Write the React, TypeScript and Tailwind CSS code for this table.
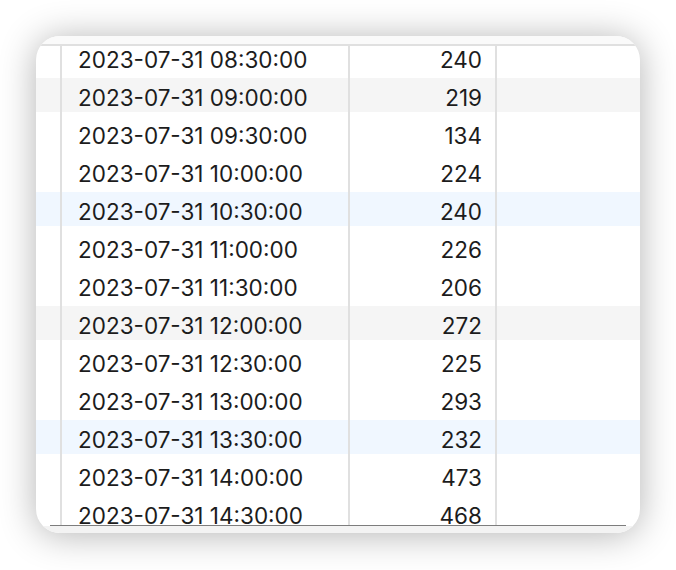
const ROWS: { time: string; value: number; tone?: 'gray' | 'blue' }[] = [
  { time: '2023-07-31 08:30:00', value: 240 },
  { time: '2023-07-31 09:00:00', value: 219, tone: 'gray' },
  { time: '2023-07-31 09:30:00', value: 134 },
  { time: '2023-07-31 10:00:00', value: 224 },
  { time: '2023-07-31 10:30:00', value: 240, tone: 'blue' },
  { time: '2023-07-31 11:00:00', value: 226 },
  { time: '2023-07-31 11:30:00', value: 206 },
  { time: '2023-07-31 12:00:00', value: 272, tone: 'gray' },
  { time: '2023-07-31 12:30:00', value: 225 },
  { time: '2023-07-31 13:00:00', value: 293 },
  { time: '2023-07-31 13:30:00', value: 232, tone: 'blue' },
  { time: '2023-07-31 14:00:00', value: 473 },
  { time: '2023-07-31 14:30:00', value: 468 },
];

const TONE_BG: Record<string, string> = {
  gray: 'bg-[linear-gradient(to_bottom,#f5f5f5_34px,transparent_34px)]',
  blue: 'bg-[linear-gradient(to_bottom,#f0f7ff_34px,transparent_34px)]',
  none: '',
};

// first row is scrolled partly under the header, so it's shorter
const Row = ({ time, value, tone, first }: { time: string; value: number; tone?: string; first?: boolean }) => {
  const pad = first ? 'pb-[3px]' : 'pt-[3px]';
  return (
    <div className={`flex shrink-0 ${first ? 'h-[32px]' : 'h-[38px]'} ${TONE_BG[tone ?? 'none']}`}>
      <div className="w-[26px] shrink-0 border-r-2 border-[#e0e0e0]" />
      <div className={`flex w-[288px] shrink-0 items-center border-r-2 border-[#e0e0e0] pl-[16px] ${pad}`}>
        {time}
      </div>
      <div className={`flex w-[147px] shrink-0 items-center justify-end border-r-2 border-[#e0e0e0] pr-[13px] ${pad}`}>
        {value}
      </div>
      <div className="flex-1" />
    </div>
  );
};

export default function App() {
  return (
    <div className="min-h-[570px] bg-white p-[36px]" style={{ fontFamily: 'Inter, "Noto Sans", sans-serif' }}>
      <div className="flex h-[497px] w-[604px] flex-col overflow-hidden rounded-[24px] bg-white text-[22.5px] leading-none text-[#1c1c1c] shadow-[0_2px_36px_rgba(0,0,0,0.3)]">
        <div className="h-[8px] shrink-0 bg-[#fafafa]" />
        <div className="h-[2px] shrink-0 bg-[#e0e0e0]" />
        <div className="flex h-[479px] shrink-0 flex-col overflow-hidden">
          {ROWS.map((r, i) => (
            <Row key={r.time} time={r.time} value={r.value} tone={r.tone} first={i === 0} />
          ))}
        </div>
        <div className="mx-[14px] h-px shrink-0 bg-[#7d7d7d]" />
        <div className="flex-1 bg-[#f3f3f3]" />
      </div>
    </div>
  );
}
